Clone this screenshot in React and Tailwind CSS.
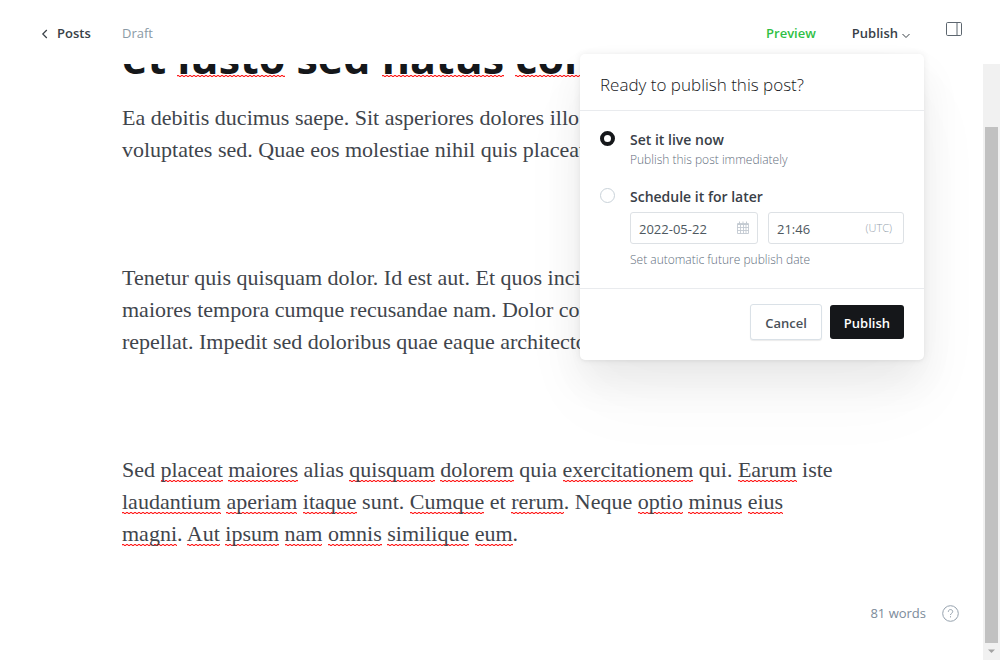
import React from "react";

function Misspelled({ children, heading }) {
  return (
    <span
      className={
        heading
          ? "bg-[linear-gradient(90deg,#ff2020_50%,#ffc0c0_50%),linear-gradient(90deg,#ffc0c0_50%,#ff2020_50%)] bg-[length:4px_1px,4px_1px] bg-[position:left_bottom_11px,left_bottom_10px] bg-repeat-x"
          : "bg-[linear-gradient(90deg,#ff2020_50%,#ffc0c0_50%),linear-gradient(90deg,#ffc0c0_50%,#ff2020_50%)] bg-[length:4px_1px,4px_1px] bg-[position:left_bottom_1px,left_bottom] bg-repeat-x"
      }
    >
      {children}
    </span>
  );
}

/* Words wrapped in underscores are drawn with a spelling underline. */
function Line({ text, heading }) {
  return (
    <span className="block whitespace-nowrap">
      {text.split("_").map((part, i) => (i % 2 ? <Misspelled key={i} heading={heading}>{part}</Misspelled> : part))}
    </span>
  );
}

const paragraphs = [
  [
    "Ea debitis ducimus saepe. Sit asperiores dolores illo",
    "voluptates sed. Quae eos molestiae nihil quis placeat",
  ],
  [
    "Tenetur quis quisquam dolor. Id est aut. Et quos incidunt",
    "maiores tempora cumque recusandae nam. Dolor consequatur",
    "repellat. Impedit sed doloribus quae eaque architecto",
  ],
  [
    "Sed _placeat_ _maiores_ alias _quisquam_ _dolorem_ quia _exercitationem_ qui. _Earum_ iste",
    "_laudantium_ _aperiam_ _itaque_ sunt. _Cumque_ et _rerum_. Neque _optio_ _minus_ _eius_",
    "_magni_. _Aut_ _ipsum_ _nam_ _omnis_ _similique_ _eum_.",
  ],
];

function CalendarIcon() {
  return (
    <svg viewBox="0 0 14 14" className="h-[14px] w-[14px]" fill="none" stroke="#c3cad1" aria-hidden="true">
      <path d="M1.5 2.5h11v10h-11zM1 6.5h12M1 9.5h12M4.5 4v9M7.5 4v9M10 4v9" strokeWidth="0.9" />
      <path d="M1.5 3.5h11M3.5 0.5v3M7 0.5v3M10.5 0.5v3" />
    </svg>
  );
}

const radioClass =
  "mt-[1px] h-[15px] w-[15px] shrink-0 appearance-none rounded-full border border-[#c9d2d9] bg-white checked:border-4 checked:border-[#15171a]";
const labelClass = "block text-sm leading-5 font-semibold text-[#394047]";
const hintClass = "text-xs leading-5 font-light text-[#5f6e7d]";
const fieldClass =
  "h-8 w-full rounded-[3px] border border-[#dde1e5] bg-white px-2 pt-[2px] text-[13px] text-[#4e5860] outline-none";

function PublishMenu() {
  return (
    <form className="absolute top-[30px] right-[-14px] z-10 w-[344px] rounded-[5px] bg-white shadow-[0_0_7px_rgba(0,0,0,0.08),0_2px_2px_rgba(0,0,0,0.02),0_22px_40px_rgba(0,0,0,0.07),0_40px_80px_rgba(0,0,0,0.03)]">
      <h2 className="border-b border-[#e9ebee] px-5 pt-[19px] pb-[13px] text-[17px] leading-6 font-light text-[#15171a]">
        Ready to publish this post?
      </h2>
      <div className="flex flex-col gap-[17px] px-5 pt-[19px] pb-[18px]">
        <div className="flex gap-[15px]">
          <input id="now" type="radio" name="when" defaultChecked className={radioClass} />
          <div>
            <label htmlFor="now" className={labelClass}>Set it live now</label>
            <p className={hintClass}>Publish this post immediately</p>
          </div>
        </div>
        <div className="flex gap-[15px]">
          <input id="later" type="radio" name="when" className={radioClass} />
          <div className="flex-1">
            <label htmlFor="later" className={labelClass}>Schedule it for later</label>
            <div className="mt-[5px] mb-[6px] flex gap-[10px]">
              <div className="relative w-32">
                <input aria-label="Publish date" defaultValue="2022-05-22" className={fieldClass} />
                <span className="absolute top-[9px] right-2"><CalendarIcon /></span>
              </div>
              <div className="relative flex-1">
                <input aria-label="Publish time" defaultValue="21:46" className={fieldClass} />
                <span className="absolute top-2 right-3 text-[11px] leading-4 font-light text-[#95a1ad]">(UTC)</span>
              </div>
            </div>
            <p className={hintClass}>Set automatic future publish date</p>
          </div>
        </div>
      </div>
      <div className="flex items-center justify-end gap-2 border-t border-[#e9ebee] px-5 pt-[15px] pb-5">
        <button type="button" className="h-9 rounded-[3px] border border-[#dae1e7] bg-white px-[14px] pt-[3px] text-[13px] font-semibold text-[#4a5158] shadow-[0_1px_1px_rgba(0,0,0,0.08)]">
          Cancel
        </button>
        <button type="submit" className="h-[34px] rounded-[3px] bg-[#15171a] px-[14px] pt-[3px] text-[13px] font-semibold text-white">
          Publish
        </button>
      </div>
    </form>
  );
}

export default function App() {
  return (
    <div className="flex h-screen flex-col bg-white font-['Open_Sans','Noto_Sans',sans-serif] text-[13px] text-[#394047]">
      <header className="flex h-16 shrink-0 items-center pt-1 pr-[38px] pl-[41px]">
        <a href="#posts" className="flex w-[81px] items-center gap-2 font-semibold">
          <svg viewBox="0 0 8 10" className="h-[10px] w-2" fill="none" stroke="currentColor" strokeWidth="1.2" aria-hidden="true">
            <path d="M5.8 1 1.8 5l4 4" />
          </svg>
          Posts
        </a>
        <span className="text-[#8a9aa5]">Draft</span>
        <div className="ml-auto flex items-center">
          <button type="button" className="mr-9 font-semibold text-[#2fbf45]">Preview</button>
          <div className="relative">
            <button type="button" className="flex items-center gap-1 font-semibold">
              Publish
              <svg viewBox="0 0 8 6" className="mt-1 h-[6px] w-2" fill="none" stroke="currentColor" aria-hidden="true">
                <path d="m0.5 1 3.5 3.5L7.5 1" />
              </svg>
            </button>
            <PublishMenu />
          </div>
          <button type="button" aria-label="Settings" className="mb-[10px] ml-9">
            <svg viewBox="0 0 16 14" className="h-[14px] w-4" fill="none" stroke="#5d666f" aria-hidden="true">
              <rect x="0.5" y="0.5" width="15" height="13" rx="1.2" />
              <path d="M11 0.5v13" />
            </svg>
          </button>
        </div>
      </header>

      <div className="flex min-h-0 flex-1">
        <main className="flex min-w-0 flex-1 flex-col overflow-hidden pr-6 pl-[122px]">
          <h1 className="-mt-9 mb-[14px] text-[43px] leading-[60px] font-bold text-[#15171a]">
            <Line heading text="et _iusto_ sed _natus_ _corporis_" />
          </h1>
          <article className="flex flex-col gap-24 font-['Liberation_Serif',serif] text-[22px] leading-8 text-[#3f454c]">
            {paragraphs.map((lines, i) => (
              <p key={i}>
                {lines.map((text) => <Line key={text} text={text} />)}
              </p>
            ))}
          </article>
          <footer className="mt-auto mb-[37px] flex items-center justify-end gap-4 text-[#7c8b9a]">
            <span>81 words</span>
            <button type="button" aria-label="Help">
              <svg viewBox="0 0 17 17" className="h-[17px] w-[17px]" fill="none" stroke="#95a1ad" aria-hidden="true">
                <circle cx="8.5" cy="8.5" r="7.8" />
                <path d="M6.3 6.8c0-3 4.4-2.9 4.4-.2 0 1.7-2.2 1.7-2.2 3.4M8.5 11.2v1.2" />
              </svg>
            </button>
          </footer>
        </main>
        <div aria-hidden="true" className="flex w-[17px] shrink-0 flex-col items-center bg-[#f1f1f1] pt-[63px]">
          <div className="w-[13px] flex-1 bg-[#c1c1c1]" />
          <svg viewBox="0 0 17 17" className="h-[17px] w-[17px]" fill="#a3a3a3">
            <path d="M5 6.5h7L8.5 10z" />
          </svg>
        </div>
      </div>
    </div>
  );
}
